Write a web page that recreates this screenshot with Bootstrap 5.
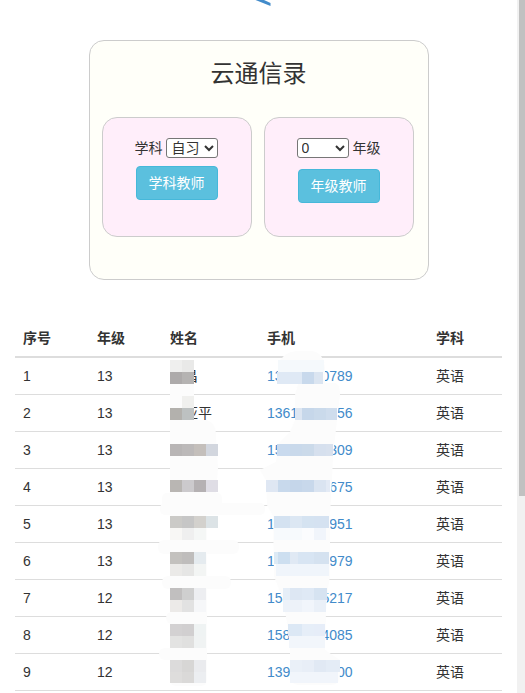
<!DOCTYPE html>
<html lang="zh">
<head>
<meta charset="utf-8">
<title>云通信录</title>
<link href="https://cdn.jsdelivr.net/npm/bootstrap@5.3.0/dist/css/bootstrap.min.css" rel="stylesheet">
<style>
html,body{height:693px;overflow:hidden}
body{font-family:"Liberation Sans","Noto Sans CJK SC",sans-serif;font-size:14px;line-height:20px;color:#333;background:#fff;padding-right:8px}
.scroll-track{position:fixed;top:0;right:0;bottom:0;width:8px;background:#f1f1f1}
.scroll-thumb{width:6px;height:496px;margin-left:2px;background:#c1c1c1}
.top-mark{display:block;width:24px;height:6px}
.panel-box{width:340px;height:240px;margin-top:34px;background:#fffff9;border:1px solid #ccc;border-radius:15px;padding-left:12px}
.panel-title{font-size:24px;line-height:34px;font-weight:400;margin:16px 0 0;padding-right:12px;height:60px;color:#333;font-family:"Liberation Sans","Noto Sans CJK SC",sans-serif}
.panel-row{gap:12px}
.inner-box{width:150px;height:120px;background:#ffeefa;border:1px solid #ccc;border-radius:15px}
.pick-row{height:20px;margin-top:20px;line-height:20px}
.pick-row select{width:52px;height:20px;font-size:14px;line-height:18px;padding:0;color:#333;background:#fff;border:1px solid #767676;border-radius:3px;vertical-align:top}
.teach-btn{width:82px;height:34px;padding:6px 0;font-size:14px;line-height:20px;color:#fff;background:#5bc0de;border:1px solid #46b8da;border-radius:4px}
.teach-btn:hover{color:#fff;background:#5bc0de;border-color:#46b8da}
.gap-a{margin-top:8px}
.gap-b{margin-top:11px}
.table-wrap{position:relative;margin:40px 15px 0}
.roster{table-layout:fixed;width:487px;margin:0;font-size:14px;--bs-table-border-color:#ddd;--bs-table-color:#333;color:#333}
.roster th,.roster td{padding:8px;line-height:20px;height:37px;border-bottom:1px solid #ddd;vertical-align:top}
.roster thead th{border-bottom:2px solid #ddd;height:37px;padding-bottom:7px;font-weight:700}
.roster a{color:#428bca;text-decoration:none}
.c-a{width:74px}.c-b{width:73px}.c-c{width:97px}.c-d{width:169px}.c-e{width:74px}
.mosaic{position:absolute;left:0;top:0;width:487px;height:400px;pointer-events:none;overflow:visible}
</style>
</head>
<body>
<div class="d-flex justify-content-center">
<svg class="top-mark" viewBox="0 0 24 6" aria-hidden="true"><polygon points="8.5,0 17,0 23.5,3 23.5,6" fill="#428bca"/></svg>
</div>
<div class="d-flex justify-content-center">
<div class="panel-box">
<h1 class="panel-title text-center">云通信录</h1>
<div class="d-flex panel-row">
<div class="inner-box text-center">
<div class="pick-row">学科 <select aria-label="学科"><option>自习</option></select></div>
<button class="btn teach-btn gap-a" type="button">学科教师</button>
</div>
<div class="inner-box text-center">
<div class="pick-row"><select aria-label="年级"><option>0</option></select> 年级</div>
<button class="btn teach-btn gap-b" type="button">年级教师</button>
</div>
</div>
</div>
</div>
<div class="table-wrap">
<table class="table roster">
<colgroup><col class="c-a"><col class="c-b"><col class="c-c"><col class="c-d"><col class="c-e"></colgroup>
<thead><tr><th>序号</th><th>年级</th><th>姓名</th><th>手机</th><th>学科</th></tr></thead>
<tbody>
<tr><td>1</td><td>13</td><td>某昌</td><td><a href="#">13500000789</a></td><td>英语</td></tr>
<tr><td>2</td><td>13</td><td>某亚平</td><td><a href="#">13610000056</a></td><td>英语</td></tr>
<tr><td>3</td><td>13</td><td>某某某</td><td><a href="#">15000000309</a></td><td>英语</td></tr>
<tr><td>4</td><td>13</td><td>某某某</td><td><a href="#">13000000675</a></td><td>英语</td></tr>
<tr><td>5</td><td>13</td><td>某某</td><td><a href="#">13000000951</a></td><td>英语</td></tr>
<tr><td>6</td><td>13</td><td>某某</td><td><a href="#">13000000979</a></td><td>英语</td></tr>
<tr><td>7</td><td>12</td><td>某某</td><td><a href="#">15000005217</a></td><td>英语</td></tr>
<tr><td>8</td><td>12</td><td>某某</td><td><a href="#">15800004085</a></td><td>英语</td></tr>
<tr><td>9</td><td>12</td><td>某某</td><td><a href="#">13900000900</a></td><td>英语</td></tr>
</tbody>
</table>
<svg class="mosaic" viewBox="0 0 487 400" aria-hidden="true">
<g transform="translate(-15,-320)" shape-rendering="crispEdges">
<g fill="#fcfcfc" shape-rendering="auto">
<path d="M170 372Q170 363 182 363Q194 363 194 372V420H206Q216 422 216 436L218 468L216 495H170Z"/>
<rect x="162" y="493" width="60" height="14" rx="5"/>
<rect x="160" y="503" width="105" height="12" rx="5"/>
<rect x="170" y="512" width="37" height="174" rx="6"/>
<rect x="158" y="540" width="81" height="14" rx="6"/>
<rect x="162" y="576" width="69" height="13" rx="6"/>
<rect x="166" y="612" width="37" height="12" rx="6"/>
<rect x="159" y="648" width="48" height="12" rx="6"/>
<path d="M278 372Q278 351 300 351H310Q325 351 325 372V383H335Q340 384 340 395L337 420L333 456L332 480L330 516V576L328 588L326 612L325 650L340 660V675Q340 685 330 685H300Q293 685 290 680V640L283 600L274 576L273 516L267 505L266 480L260 470L276 462L278 444L290 432L295 420V395L298 384H278Z"/>
</g>
<rect x="170" y="360" width="12" height="12" fill="#efefee"/><rect x="182" y="360" width="12" height="12" fill="#e9e9e8"/>
<rect x="170" y="372" width="12" height="12" fill="#adaaaa"/><rect x="182" y="372" width="12" height="12" fill="#b5b3b2"/>
<rect x="182" y="396" width="12" height="12" fill="#f0f0ee"/>
<rect x="170" y="408" width="12" height="12" fill="#b3b1ad"/><rect x="182" y="408" width="12" height="12" fill="#bdc1c1"/>
<rect x="170" y="444" width="12" height="12" fill="#b8b5b5"/><rect x="182" y="444" width="12" height="12" fill="#bcb9b9"/><rect x="194" y="444" width="12" height="12" fill="#c4bfbb"/><rect x="206" y="444" width="12" height="12" fill="#d2d6de"/>
<rect x="170" y="480" width="12" height="12" fill="#b9b6b3"/><rect x="182" y="480" width="12" height="12" fill="#cccacd"/><rect x="194" y="480" width="12" height="12" fill="#b5b1b3"/><rect x="206" y="480" width="12" height="12" fill="#dfdde5"/>
<rect x="170" y="516" width="12" height="12" fill="#cbcac7"/><rect x="182" y="516" width="12" height="12" fill="#c6c6c6"/><rect x="194" y="516" width="12" height="12" fill="#d3d1cd"/><rect x="206" y="516" width="12" height="12" fill="#dce3e6"/>
<rect x="170" y="528" width="12" height="12" fill="#f8f7f5"/><rect x="182" y="528" width="12" height="12" fill="#efefef"/><rect x="194" y="528" width="12" height="12" fill="#f5f7f6"/>
<rect x="170" y="552" width="12" height="12" fill="#c3c1be"/><rect x="182" y="552" width="12" height="12" fill="#bfbdbc"/><rect x="194" y="552" width="12" height="12" fill="#e5ebef"/>
<rect x="170" y="564" width="12" height="12" fill="#ebeae8"/><rect x="182" y="564" width="12" height="12" fill="#e6e6e5"/><rect x="194" y="564" width="12" height="12" fill="#f3f5f4"/>
<rect x="170" y="588" width="12" height="12" fill="#c1bfbf"/><rect x="182" y="588" width="12" height="12" fill="#cfcfcf"/><rect x="194" y="588" width="12" height="12" fill="#edeef1"/>
<rect x="170" y="600" width="12" height="12" fill="#eceae8"/><rect x="182" y="600" width="12" height="12" fill="#e2e2e2"/><rect x="194" y="600" width="12" height="12" fill="#f6f7f9"/>
<rect x="170" y="624" width="12" height="12" fill="#d3d1d2"/><rect x="182" y="624" width="12" height="12" fill="#d1cfd0"/><rect x="194" y="624" width="12" height="12" fill="#eff3f3"/>
<rect x="170" y="636" width="12" height="12" fill="#e3e3e2"/><rect x="182" y="636" width="12" height="12" fill="#e0e0df"/><rect x="194" y="636" width="12" height="12" fill="#f0f3f3"/>
<rect x="170" y="660" width="12" height="12" fill="#dcdbdb"/><rect x="182" y="660" width="12" height="12" fill="#d7d6d5"/><rect x="194" y="660" width="12" height="12" fill="#eaebee"/>
<rect x="170" y="672" width="12" height="11" fill="#dedddc"/><rect x="182" y="672" width="12" height="11" fill="#dad9d8"/><rect x="194" y="672" width="12" height="11" fill="#eceef1"/>
<rect x="278" y="360" width="46" height="12" fill="#f5f9fc"/>
<rect x="277" y="372" width="25" height="12" fill="#dfe9f5"/><rect x="302" y="372" width="12" height="12" fill="#c8d9ec"/><rect x="314" y="372" width="9" height="12" fill="#dbe5f1"/>
<rect x="295" y="408" width="7" height="12" fill="#dde6f2"/><rect x="302" y="408" width="12" height="12" fill="#c6d7ea"/><rect x="314" y="408" width="12" height="12" fill="#cadaeb"/><rect x="326" y="408" width="11" height="12" fill="#cfdded"/>
<rect x="277" y="444" width="13" height="12" fill="#c9daee"/><rect x="290" y="444" width="12" height="12" fill="#c9d9eb"/><rect x="302" y="444" width="12" height="12" fill="#cbdaea"/><rect x="314" y="444" width="12" height="12" fill="#d6e0ee"/><rect x="326" y="444" width="7" height="12" fill="#d8e1ee"/>
<rect x="266" y="480" width="12" height="12" fill="#dfe7f3"/><rect x="278" y="480" width="12" height="12" fill="#c8d9ec"/><rect x="290" y="480" width="12" height="12" fill="#c5d6ea"/><rect x="302" y="480" width="12" height="12" fill="#c8d8eb"/><rect x="314" y="480" width="12" height="12" fill="#dae4f1"/><rect x="326" y="480" width="4" height="12" fill="#e3eaf5"/>
<rect x="274" y="516" width="16" height="12" fill="#d4e2f1"/><rect x="290" y="516" width="12" height="12" fill="#dce7f3"/><rect x="302" y="516" width="12" height="12" fill="#d5e3f1"/><rect x="314" y="516" width="15" height="12" fill="#d5e2f1"/>
<rect x="274" y="528" width="28" height="12" fill="#f7fafd"/><rect x="302" y="528" width="12" height="12" fill="#fbfcfe"/><rect x="314" y="528" width="12" height="12" fill="#f1f5fb"/>
<rect x="274" y="552" width="4" height="12" fill="#ddeaf5"/><rect x="278" y="552" width="12" height="12" fill="#cddff0"/><rect x="290" y="552" width="8" height="12" fill="#e0e9f4"/><rect x="298" y="552" width="16" height="12" fill="#d8e5f3"/><rect x="314" y="552" width="15" height="12" fill="#d5e2f0"/>
<rect x="276" y="564" width="53" height="12" fill="#f0f5fb"/>
<rect x="283" y="588" width="7" height="12" fill="#e6eef7"/><rect x="290" y="588" width="12" height="12" fill="#dde7f3"/><rect x="302" y="588" width="12" height="12" fill="#dfe9f5"/><rect x="314" y="588" width="13" height="12" fill="#d6e3f1"/>
<rect x="283" y="600" width="19" height="12" fill="#edf2f9"/><rect x="302" y="600" width="12" height="12" fill="#f1f5fb"/><rect x="314" y="600" width="12" height="12" fill="#eaf0f8"/>
<rect x="288" y="624" width="14" height="12" fill="#dce8f5"/><rect x="302" y="624" width="12" height="12" fill="#e6eef8"/><rect x="314" y="624" width="11" height="12" fill="#e6edf8"/>
<rect x="289" y="636" width="36" height="12" fill="#f2f6fb"/>
<rect x="290" y="660" width="12" height="12" fill="#eaf0f8"/><rect x="302" y="660" width="12" height="12" fill="#e8eef7"/><rect x="314" y="660" width="12" height="12" fill="#e1e9f4"/><rect x="326" y="660" width="14" height="12" fill="#e4ecf6"/>
<rect x="290" y="672" width="48" height="11" fill="#f1f5fb"/>
</g>
</svg>
</div>
<div class="scroll-track"><div class="scroll-thumb"></div></div>
<script src="https://cdn.jsdelivr.net/npm/bootstrap@5.3.0/dist/js/bootstrap.bundle.min.js"></script>
</body>
</html>
